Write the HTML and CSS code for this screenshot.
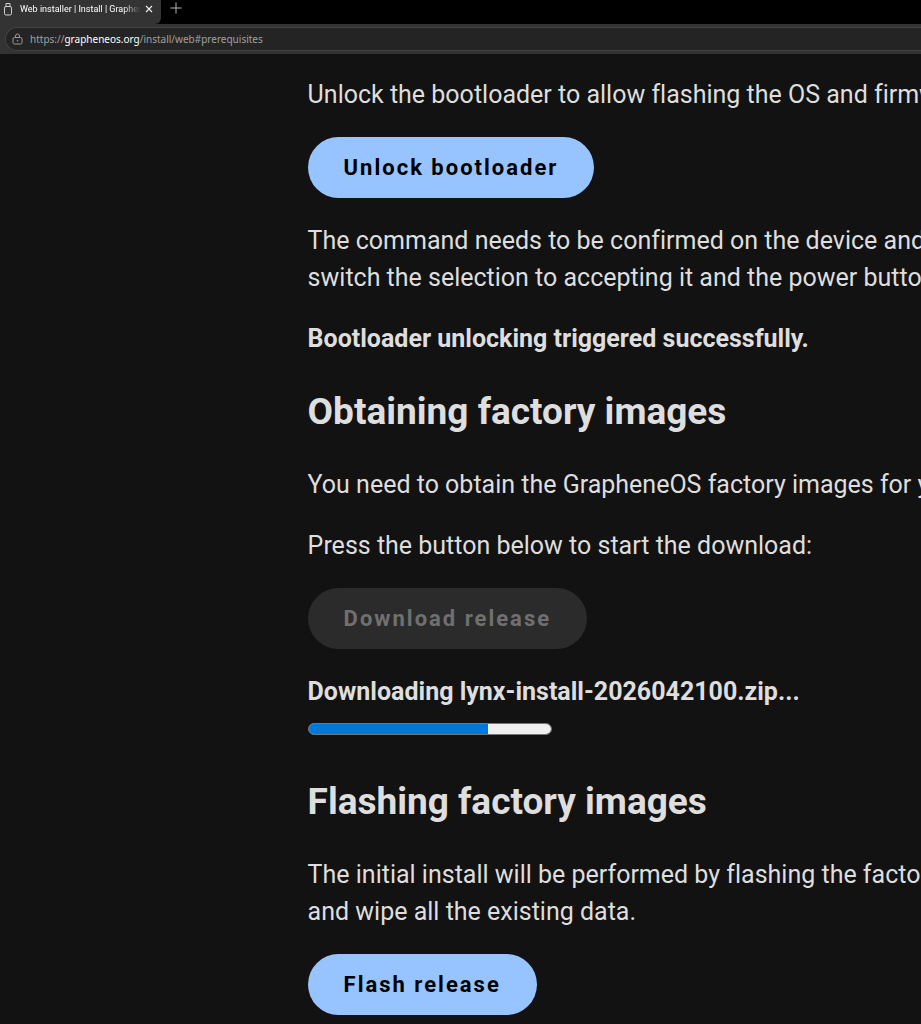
FILE: index.html
```html
<!DOCTYPE html>
<html lang="en">
<head>
  <meta charset="UTF-8" />
  <meta name="viewport" content="width=device-width, initial-scale=1" />
  <title>Web installer | Install | GrapheneOS</title>
  <link rel="stylesheet" href="styles.css">
</head>
<body>

  <header class="browser">
    <div class="tab-strip">
      <div class="tab">
        <svg class="favicon" width="10" height="14" viewBox="0 0 10 14" fill="none" stroke="#d0d0d0">
          <path d="M3 5V1.5h4V5" />
          <rect x="1.5" y="4.5" width="7" height="8.5" rx="1.5" />
        </svg>
        <span class="tab-title">Web installer | Install | Graphene</span>
        <button class="icon-button" aria-label="Close tab">
          <svg width="8" height="8" viewBox="0 0 8 8" stroke="#f0f0f0" stroke-width="1.1">
            <path d="M1 1l6 6M7 1l-6 6" />
          </svg>
        </button>
      </div>
      <button class="icon-button new-tab" aria-label="New tab">
        <svg width="12" height="12" viewBox="0 0 12 12" stroke="#b4b4b4">
          <path d="M6 .5v11M.5 6h11" />
        </svg>
      </button>
    </div>
    <div class="toolbar">
      <a class="address" href="#prerequisites">
        <svg width="11" height="12" viewBox="0 0 11 12" fill="none" stroke="#9a9a9a">
          <rect x="1" y="4.5" width="9" height="6.5" rx="1.5" />
          <path d="M3.5 4.5V3a2 2 0 0 1 4 0v1.5" />
          <circle cx="5.5" cy="7.7" r=".8" fill="#9a9a9a" stroke="none" />
        </svg>
        <span>https://<span class="host">grapheneos.org</span>/install/web#prerequisites</span>
      </a>
    </div>
  </header>

  <main class="page">
    <p>Unlock the bootloader to allow flashing the OS and firmware</p>
    <button class="action">Unlock bootloader</button>
    <p>The command needs to be confirmed on the device and<br>
    switch the selection to accepting it and the power button</p>
    <p><strong>Bootloader unlocking triggered successfully.</strong></p>

    <h2>Obtaining factory images</h2>
    <p>You need to obtain the GrapheneOS factory images for your</p>
    <p>Press the button below to start the download:</p>
    <button class="action" disabled>Download release</button>
    <p class="status"><label for="download"><strong>Downloading lynx-install-2026042100.zip...</strong></label></p>
    <progress id="download" value="74" max="100"></progress>

    <h2>Flashing factory images</h2>
    <p>The initial install will be performed by flashing the factory<br>
    and wipe all the existing data.</p>
    <button class="action">Flash release</button>
  </main>

</body>
</html>
```
FILE: styles.css
```css
body {
  margin: 0;
  background: #121212;
  color: #dedede;
  font-family: Roboto, sans-serif;
  font-size: 25px;
  line-height: 37px;
  font-variant-ligatures: none;
  overflow-x: hidden;
}

/* browser bar */
.browser {
  font-family: "Noto Sans", sans-serif;
  font-size: 10px;
  line-height: 12px;
}

.tab-strip {
  display: flex;
  align-items: center;
  height: 24px;
  background: #000;
}

.tab {
  display: flex;
  align-items: center;
  box-sizing: border-box;
  width: 161px;
  height: 24px;
  padding: 0 8px 6px 3px;
  background: #333;
  border-radius: 0 0 6px 0;
}

.favicon {
  flex: none;
  margin-right: 7px;
}

.tab-title {
  flex: 1;
  min-width: 0;
  overflow: hidden;
  white-space: nowrap;
  color: #fff;
  font-family: Roboto, sans-serif;
  font-size: 9px;
  -webkit-mask-image: linear-gradient(to right, #000 85%, transparent);
  mask-image: linear-gradient(to right, #000 85%, transparent);
}

.icon-button {
  display: flex;
  margin: 0 0 0 4px;
  padding: 0;
  border: none;
  background: none;
  cursor: pointer;
}

.new-tab {
  margin-left: 9px;
  padding-bottom: 8px;
}

.toolbar {
  box-sizing: border-box;
  height: 30px;
  padding: 3px 0 3px 5px;
  background: #333;
}

.address {
  display: flex;
  align-items: center;
  gap: 7px;
  box-sizing: border-box;
  height: 24px;
  padding-left: 6px;
  border: 1px solid #424242;
  border-right: none;
  border-radius: 12px 0 0 12px;
  background: #242424;
  color: #a0a0a0;
  text-decoration: none;
}

.host {
  color: #fff;
}

/* page content */
.page {
  padding: 22px 0 9px 33.4%;
  white-space: nowrap;
}

p {
  margin: 0 0 24px;
}

h2 {
  margin: 30px 0;
  font-size: 37px;
  line-height: 49px;
}

.action {
  display: block;
  margin: 0 0 24px;
  padding: 12px 36px;
  border: none;
  border-radius: 31px;
  background: #97c4ff;
  color: #000;
  font-family: inherit;
  font-size: 22px;
  font-weight: 700;
  line-height: 37px;
  letter-spacing: 2px;
  cursor: pointer;
}

.action:disabled {
  background: #2b2b2b;
  color: #707070;
  cursor: default;
}

.status {
  margin-bottom: 13px;
}

progress {
  display: block;
  box-sizing: border-box;
  width: 244px;
  height: 12px;
  margin-bottom: 42px;
  border: 1px solid #767676;
  border-radius: 6px;
  background: #efefef;
  overflow: hidden;
  -webkit-appearance: none;
  appearance: none;
}

progress::-webkit-progress-bar {
  background: #efefef;
}

progress::-webkit-progress-value {
  background: #0078d7;
}
```
